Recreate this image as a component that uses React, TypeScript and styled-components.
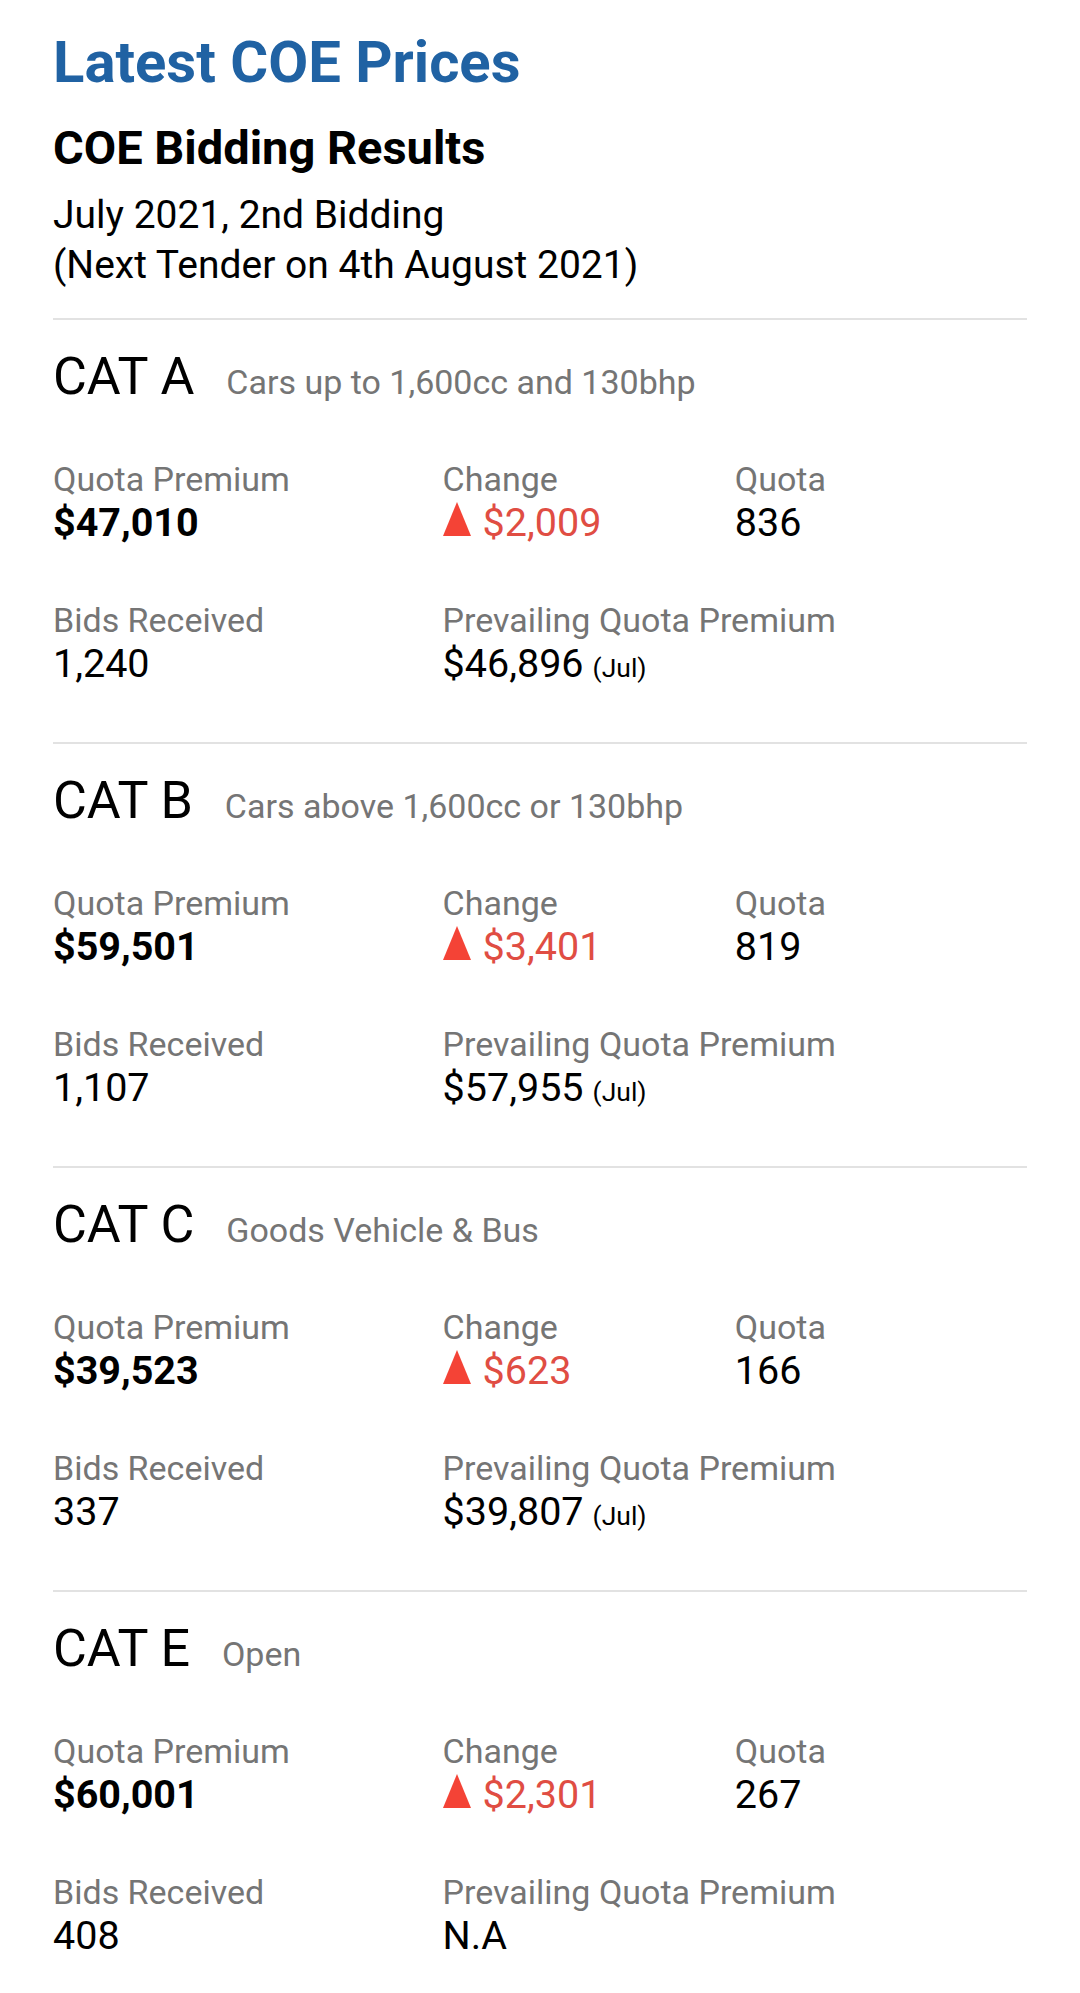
import styled, { createGlobalStyle } from 'styled-components'

const GlobalStyle = createGlobalStyle`
  html, body {
    margin: 0;
    padding: 0;
    background: #ffffff;
  }
  body {
    font-family: Roboto, "Noto Sans", "Liberation Sans", sans-serif;
    color: #000000;
  }
`

type Category = {
  name: string
  desc: string
  premium: string
  change: string
  quota: string
  bids: string
  prevailing: string
  month?: string
}

const categories: Category[] = [
  {
    name: 'CAT A',
    desc: 'Cars up to 1,600cc and 130bhp',
    premium: '$47,010',
    change: '$2,009',
    quota: '836',
    bids: '1,240',
    prevailing: '$46,896',
    month: '(Jul)',
  },
  {
    name: 'CAT B',
    desc: 'Cars above 1,600cc or 130bhp',
    premium: '$59,501',
    change: '$3,401',
    quota: '819',
    bids: '1,107',
    prevailing: '$57,955',
    month: '(Jul)',
  },
  {
    name: 'CAT C',
    desc: 'Goods Vehicle & Bus',
    premium: '$39,523',
    change: '$623',
    quota: '166',
    bids: '337',
    prevailing: '$39,807',
    month: '(Jul)',
  },
  {
    name: 'CAT E',
    desc: 'Open',
    premium: '$60,001',
    change: '$2,301',
    quota: '267',
    bids: '408',
    prevailing: 'N.A',
  },
]

export default function App() {
  return (
    <>
      <GlobalStyle />
      <Page>
        <Title>Latest COE Prices</Title>
        <Heading>COE Bidding Results</Heading>
        <Intro>
          July 2021, 2nd Bidding
          <br />
          (Next Tender on 4th August 2021)
        </Intro>

        {categories.map((cat) => (
          <Section key={cat.name}>
            <CatHeader>
              <CatName>{cat.name}</CatName>
              <CatDesc>{cat.desc}</CatDesc>
            </CatHeader>
            <Stats>
              <Stat>
                <Label>Quota Premium</Label>
                <Value $bold>{cat.premium}</Value>
              </Stat>
              <Stat>
                <Label>Change</Label>
                <Value $up>
                  <UpArrow />
                  {cat.change}
                </Value>
              </Stat>
              <Stat>
                <Label>Quota</Label>
                <Value>{cat.quota}</Value>
              </Stat>
              <Stat>
                <Label>Bids Received</Label>
                <Value>{cat.bids}</Value>
              </Stat>
              <Stat $wide>
                <Label>Prevailing Quota Premium</Label>
                <Value>
                  {cat.prevailing}
                  {cat.month && <Month>{cat.month}</Month>}
                </Value>
              </Stat>
            </Stats>
          </Section>
        ))}
      </Page>
    </>
  )
}

const Page = styled.div`
  padding: 28px 53px 0;
`

const Title = styled.h1`
  margin: 0;
  font-size: 58px;
  line-height: 68px;
  font-weight: 700;
  color: #2062a3;
`

const Heading = styled.h2`
  margin: 24px 0 0;
  font-size: 47px;
  line-height: 56px;
  font-weight: 700;
`

const Intro = styled.p`
  margin: 14px 0 28px;
  font-size: 39px;
  line-height: 50px;
  font-weight: 400;
`

const Section = styled.section`
  border-top: 2px solid #e2e2e2;
  padding: 27px 0 54px;
`

const CatHeader = styled.div`
  display: flex;
  align-items: baseline;
  gap: 32px;
  line-height: 60px;
`

const CatName = styled.span`
  font-size: 52px;
`

const CatDesc = styled.span`
  font-size: 34px;
  line-height: 1;
  color: #757575;
`

const Stats = styled.div`
  display: grid;
  grid-template-columns: 4fr 3fr 3fr;
  row-gap: 53px;
  margin-top: 52px;
`

const Stat = styled.div<{ $wide?: boolean }>`
  display: flex;
  flex-direction: column;
  grid-column: ${(p) => (p.$wide ? 'span 2' : 'auto')};
`

const Label = styled.span`
  font-size: 34px;
  line-height: 40px;
  color: #757575;
`

const Value = styled.span<{ $bold?: boolean; $up?: boolean }>`
  display: flex;
  align-items: baseline;
  font-size: 39.5px;
  line-height: 48px;
  font-weight: ${(p) => (p.$bold ? 700 : 400)};
  color: ${(p) => (p.$up ? '#e04d43' : '#000000')};

  svg {
    flex-shrink: 0;
    margin-right: 12px;
  }
`

const Month = styled.span`
  font-size: 26.5px;
  line-height: 1;
  margin-left: 9px;
`

const UpArrow = () => (
  <svg width="28" height="34" viewBox="0 0 28 34">
    <path d="M14 0 L28 34 L0 34 Z" fill="#f44336" />
  </svg>
)
